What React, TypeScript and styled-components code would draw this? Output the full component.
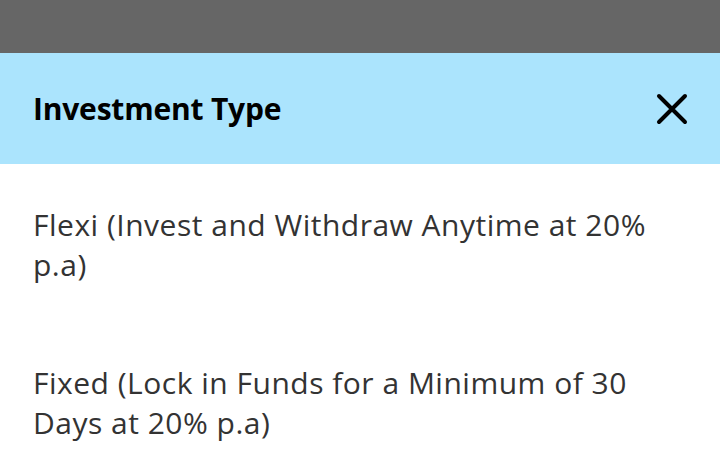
import React from "react";
import styled, { createGlobalStyle } from "styled-components";

const GlobalStyle = createGlobalStyle`
  html, body {
    margin: 0;
    padding: 0;
    background: #ffffff;
  }
  body {
    font-family: "Open Sans", "Noto Sans", sans-serif;
  }
`;

const Screen = styled.div`
  width: 720px;
  height: 475px;
  overflow: hidden;
  display: flex;
  flex-direction: column;
`;

const Backdrop = styled.div`
  height: 53px;
  flex-shrink: 0;
  background: #666666;
`;

const Header = styled.header`
  height: 111px;
  flex-shrink: 0;
  background: #abe4fd;
  display: flex;
  align-items: center;
  justify-content: space-between;
  padding: 0 28px 0 33px;
`;

const Title = styled.h2`
  margin: 0;
  font-size: 30px;
  font-weight: 700;
  letter-spacing: -0.2px;
  color: #000000;
`;

const CloseButton = styled.button`
  border: 0;
  background: transparent;
  padding: 0;
  width: 40px;
  height: 40px;
  display: flex;
  align-items: center;
  justify-content: center;
  cursor: pointer;
`;

const OptionList = styled.ul`
  list-style: none;
  margin: 0;
  padding: 0;
`;

const Option = styled.li`
  padding: 41px 44px 37px 33px;
  font-size: 30px;
  line-height: 40px;
  letter-spacing: 0.5px;
  color: #333333;
`;

const options = [
  "Flexi (Invest and Withdraw Anytime at 20% p.a)",
  "Fixed (Lock in Funds for a Minimum of 30 Days at 20% p.a)",
];

export default function App(): React.ReactElement {
  return (
    <>
      <GlobalStyle />
      <Screen>
        <Backdrop />
        <Header>
          <Title>Investment Type</Title>
          <CloseButton aria-label="Close">
            <svg width="34" height="34" viewBox="0 0 34 34">
              <path
                d="M4 4L30 30M30 4L4 30"
                stroke="#000"
                strokeWidth="4"
                strokeLinecap="round"
              />
            </svg>
          </CloseButton>
        </Header>
        <OptionList>
          {options.map((label) => (
            <Option key={label}>{label}</Option>
          ))}
        </OptionList>
      </Screen>
    </>
  );
}
